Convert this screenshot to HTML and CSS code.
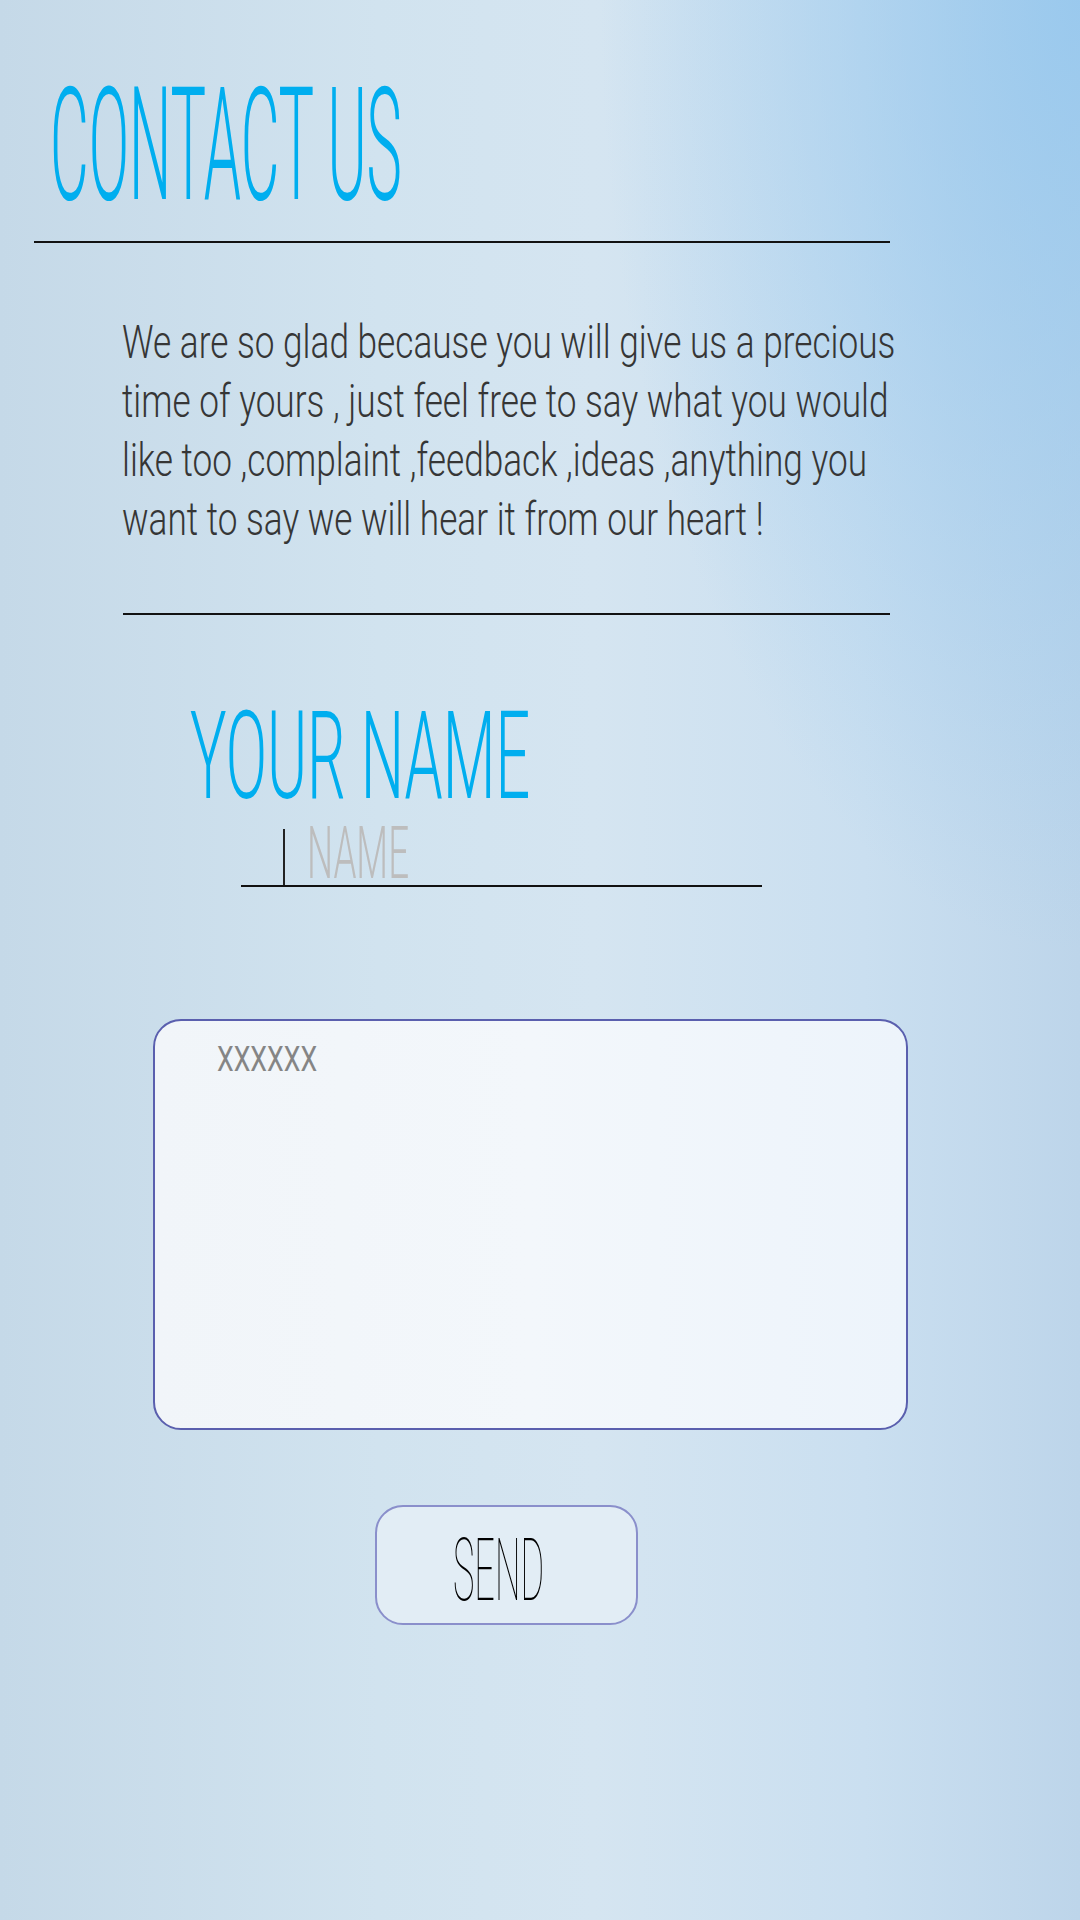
FILE: index.html
```html
<!DOCTYPE html>
<html lang="en">
<head>
<meta charset="utf-8">
<title>Contact Us</title>
<link rel="stylesheet" href="styles.css">
</head>
<body>
<main class="page">
  <h1 class="title"><span class="squeeze squeeze-title">CONTACT US</span></h1>
  <div class="rule rule-top"></div>
  <p class="intro"><span class="squeeze squeeze-intro">We are so glad because you will give us a precious<br>time of yours , just feel free to say what you would<br>like too ,complaint ,feedback ,ideas ,anything you<br>want to say we will hear it from our heart !</span></p>
  <div class="rule rule-mid"></div>
  <form class="form">
    <h2 class="label"><span class="squeeze squeeze-label">YOUR NAME</span></h2>
    <div class="name-field">
      <span class="caret"></span>
      <span class="placeholder"><span class="squeeze squeeze-ph">NAME</span></span>
    </div>
    <div class="message">
      <span class="squeeze squeeze-msg">XXXXXX</span>
    </div>
    <button type="button" class="send"><span class="squeeze squeeze-send">SEND</span></button>
  </form>
</main>
</body>
</html>
```

FILE: styles.css
```css
html, body {
  margin: 0;
  padding: 0;
}

body {
  width: 1080px;
  height: 1920px;
  overflow: hidden;
  font-family: Roboto, "Liberation Sans", sans-serif;
}

.page {
  width: 1080px;
  height: 1920px;
  box-sizing: border-box;
  padding-top: 66px;
  overflow: hidden;
  display: flex;
  flex-direction: column;
  align-items: flex-start;
  background:
    radial-gradient(ellipse 480px 950px at 100% 0%, rgba(148, 199, 238, 0.85), rgba(148, 199, 238, 0) 100%),
    linear-gradient(90deg, #c5d9e8 0%, #d1e3ef 35%, #d5e5f1 55%, #cadff0 80%, #bdd5ea 100%);
}

.squeeze {
  display: inline-block;
  white-space: nowrap;
  transform-origin: 0 0;
}

.title {
  margin: 0 0 0 50px;
  font-size: 158px;
  line-height: 158px;
  height: 158px;
  font-weight: 300;
  color: #00aeef;
}
.squeeze-title { transform: scaleX(0.377); }

.rule {
  height: 2px;
  background: #121212;
}
.rule-top {
  margin: 17px 0 0 34px;
  width: 856px;
}

.intro {
  margin: 70px 0 0 122px;
  font-size: 46px;
  line-height: 59px;
  height: 236px;
  font-weight: 300;
  color: #363636;
}
.squeeze-intro { transform: scaleX(0.765); }

.rule-mid {
  margin: 64px 0 0 123px;
  width: 767px;
}

.form {
  display: flex;
  flex-direction: column;
  align-items: flex-start;
  margin: 0;
}

.label {
  margin: 81px 0 0 190px;
  font-size: 122px;
  line-height: 122px;
  height: 122px;
  font-weight: 300;
  color: #00aeef;
}
.squeeze-label { transform: scaleX(0.5); }

.name-field {
  margin-left: 241px;
  width: 521px;
  height: 67px;
  border-bottom: 2px solid #111;
  display: flex;
  align-items: flex-start;
}
.caret {
  margin: 11px 0 0 42px;
  width: 2px;
  height: 56px;
  background: #222;
}
.placeholder {
  margin-left: 22px;
  font-size: 72px;
  line-height: 72px;
  height: 72px;
  font-weight: 300;
  color: #bdbdbd;
}
.squeeze-ph { transform: scaleX(0.51); }

.message {
  margin: 132px 0 0 153px;
  width: 755px;
  height: 411px;
  box-sizing: border-box;
  border: 2px solid #5a5fae;
  border-radius: 28px;
  padding: 21px 0 0 62px;
  background: linear-gradient(90deg, #f1f5f9 0%, #f3f7fb 50%, #edf4fb 100%);
  font-size: 35px;
  line-height: 35px;
  color: #858585;
}
.squeeze-msg { transform: scaleX(0.76); }

.send {
  margin: 75px 0 0 375px;
  width: 263px;
  height: 120px;
  box-sizing: border-box;
  border: 2px solid #8a8fcb;
  border-radius: 28px;
  background: #e2edf5;
  padding: 0 0 0 76px;
  display: flex;
  align-items: center;
  font-family: Roboto, "Liberation Sans", sans-serif;
  font-size: 87px;
  line-height: 87px;
  font-weight: 100;
  color: #000;
  cursor: pointer;
}
.squeeze-send { transform: scaleX(0.415); margin-top: 11px; }
```
